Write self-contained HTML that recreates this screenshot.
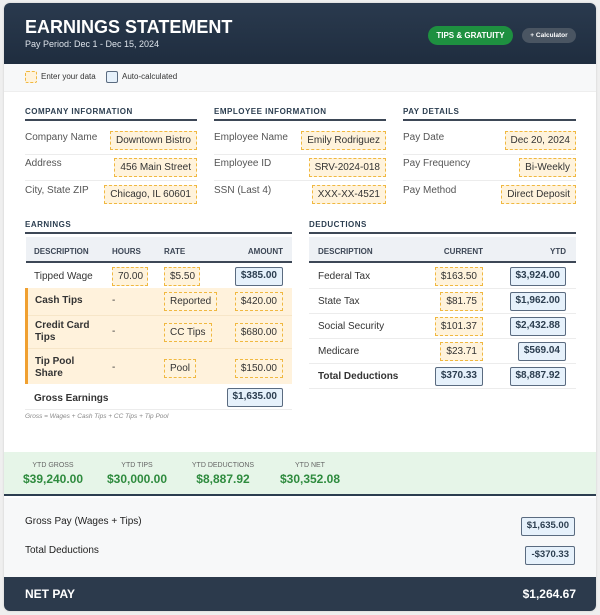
<!DOCTYPE html>
<html><head><meta charset="utf-8"><style>
*{box-sizing:border-box;margin:0;padding:0}
body{width:600px;height:615px;background:#efefef;font-family:"Liberation Sans",Arial,sans-serif;color:#333;position:relative;overflow:hidden}
.card{position:absolute;left:4px;top:3px;width:592px;height:608px;background:#fff;border-radius:6px;overflow:hidden;box-shadow:0 0 2px rgba(0,0,0,.15)}
.a{position:absolute}
.hdr{left:0;top:0;width:592px;height:61px;background:linear-gradient(#2a3a4e,#1f2d3f)}
.in{position:absolute;border:1px dashed #f0b840;background:#fff3dc;height:19px;font-size:10px;line-height:17px;padding:0 5px;color:#333;white-space:nowrap}
.au{position:absolute;border:1px solid #5a6b80;background:#e6f1fb;height:18px;font-size:10px;line-height:16px;padding:0 5px;color:#2c3e50;font-weight:bold;border-radius:2px;white-space:nowrap}
.sh{position:absolute;font-size:8px;font-weight:bold;letter-spacing:.5px;color:#2c3e50;border-bottom:2px solid #3d4756;height:14px}
.lb{position:absolute;font-size:10px;color:#555}
.sep{position:absolute;height:1px;background:#ececec}
.th{position:absolute;font-size:8px;font-weight:bold;color:#3d4756}
.t{position:absolute;font-size:10px;color:#333;line-height:12px}
.b{font-weight:bold}
.yl{position:absolute;font-size:7px;color:#666;text-align:center;width:90px}
.yv{position:absolute;font-size:12px;font-weight:bold;color:#2e8b3e;text-align:center;width:90px}
</style></head><body>
<div class="card">
 <div class="a hdr"></div>
 <div class="a" style="left:21px;top:14px;font-size:18px;font-weight:bold;color:#fff">EARNINGS STATEMENT</div>
 <div class="a" style="left:21px;top:36px;font-size:9px;color:#dde3ea">Pay Period: Dec 1 - Dec 15, 2024</div>
 <div class="a" style="left:424px;top:23px;width:85px;height:19px;background:#1e9040;border-radius:10px;color:#fff;font-size:8px;font-weight:bold;text-align:center;line-height:19px">TIPS &amp; GRATUITY</div>
 <div class="a" style="left:518px;top:25px;width:54px;height:15px;background:#4a5562;border-radius:8px;color:#fff;font-size:6.5px;font-weight:bold;text-align:center;line-height:15px">+ Calculator</div>

 <div class="a" style="left:0;top:61px;width:592px;height:28px;background:#f7f8f9;border-bottom:1px solid #eee"></div>
 <div class="a" style="left:21px;top:68px;width:12px;height:12px;border:1px dashed #f0b840;background:#fff3dc;border-radius:2px"></div>
 <div class="a" style="left:37px;top:69px;font-size:8px;color:#333">Enter your data</div>
 <div class="a" style="left:102px;top:68px;width:12px;height:12px;border:1px solid #5a6b80;background:#e6f1fb;border-radius:2px"></div>
 <div class="a" style="left:118px;top:69px;font-size:8px;color:#333">Auto-calculated</div>

 <div class="sh" style="left:21px;top:104px;width:172px">COMPANY INFORMATION</div>
 <div class="sh" style="left:210px;top:104px;width:172px">EMPLOYEE INFORMATION</div>
 <div class="sh" style="left:399px;top:104px;width:173px">PAY DETAILS</div>

 <div class="lb" style="left:21px;top:129px">Company Name</div><div class="in" style="right:399px;top:128px">Downtown Bistro</div>
 <div class="sep" style="left:21px;top:151px;width:172px"></div>
 <div class="lb" style="left:21px;top:155px">Address</div><div class="in" style="right:399px;top:155px">456 Main Street</div>
 <div class="sep" style="left:21px;top:177px;width:172px"></div>
 <div class="lb" style="left:21px;top:182px">City, State ZIP</div><div class="in" style="right:399px;top:182px">Chicago, IL 60601</div>

 <div class="lb" style="left:210px;top:129px">Employee Name</div><div class="in" style="right:210px;top:128px">Emily Rodriguez</div>
 <div class="sep" style="left:210px;top:151px;width:172px"></div>
 <div class="lb" style="left:210px;top:155px">Employee ID</div><div class="in" style="right:210px;top:155px">SRV-2024-018</div>
 <div class="sep" style="left:210px;top:177px;width:172px"></div>
 <div class="lb" style="left:210px;top:182px">SSN (Last 4)</div><div class="in" style="right:210px;top:182px">XXX-XX-4521</div>

 <div class="lb" style="left:399px;top:129px">Pay Date</div><div class="in" style="right:20px;top:128px">Dec 20, 2024</div>
 <div class="sep" style="left:399px;top:151px;width:173px"></div>
 <div class="lb" style="left:399px;top:155px">Pay Frequency</div><div class="in" style="right:20px;top:155px">Bi-Weekly</div>
 <div class="sep" style="left:399px;top:177px;width:173px"></div>
 <div class="lb" style="left:399px;top:182px">Pay Method</div><div class="in" style="right:20px;top:182px">Direct Deposit</div>

 <div class="sh" style="left:21px;top:217px;width:267px">EARNINGS</div>
 <div class="sh" style="left:305px;top:217px;width:267px">DEDUCTIONS</div>

 <div class="a" style="left:22px;top:234px;width:266px;height:26px;background:#eef1f5;border-bottom:2px solid #3d4756"></div>
 <div class="th" style="left:30px;top:244px">DESCRIPTION</div>
 <div class="th" style="left:108px;top:244px">HOURS</div>
 <div class="th" style="left:160px;top:244px">RATE</div>
 <div class="th" style="right:313px;top:244px">AMOUNT</div>
 <div class="t" style="left:30px;top:268px">Tipped Wage</div>
 <div class="in" style="left:108px;top:264px;width:36px">70.00</div>
 <div class="in" style="left:160px;top:264px;width:36px">$5.50</div>
 <div class="au" style="right:313px;top:264px;height:19px">$385.00</div>
 <div class="a" style="left:21px;top:285px;width:267px;height:96px;background:#fff2dc;border-left:3px solid #f0a030"></div>
 <div class="sep" style="left:24px;top:312px;width:264px;background:#f7e6c8"></div>
 <div class="sep" style="left:24px;top:345px;width:264px;background:#f7e6c8"></div>
 <div class="t b" style="left:31px;top:292px">Cash Tips</div>
 <div class="t" style="left:108px;top:292px">-</div>
 <div class="in" style="left:160px;top:289px">Reported</div>
 <div class="in" style="right:313px;top:289px">$420.00</div>
 <div class="t b" style="left:31px;top:317px">Credit Card<br>Tips</div>
 <div class="t" style="left:108px;top:323px">-</div>
 <div class="in" style="left:160px;top:320px">CC Tips</div>
 <div class="in" style="right:313px;top:320px">$680.00</div>
 <div class="t b" style="left:31px;top:353px">Tip Pool<br>Share</div>
 <div class="t" style="left:108px;top:359px">-</div>
 <div class="in" style="left:160px;top:356px">Pool</div>
 <div class="in" style="right:313px;top:356px">$150.00</div>
 <div class="t b" style="left:30px;top:390px">Gross Earnings</div>
 <div class="au" style="right:313px;top:385px;height:19px">$1,635.00</div>
 <div class="sep" style="left:21px;top:406px;width:267px"></div>
 <div class="a" style="left:21px;top:410px;font-size:6.5px;font-style:italic;color:#888">Gross = Wages + Cash Tips + CC Tips + Tip Pool</div>

 <div class="a" style="left:305px;top:234px;width:267px;height:26px;background:#eef1f5;border-bottom:2px solid #3d4756"></div>
 <div class="th" style="left:314px;top:244px">DESCRIPTION</div>
 <div class="th" style="right:113px;top:244px">CURRENT</div>
 <div class="th" style="right:30px;top:244px">YTD</div>
 <div class="t" style="left:314px;top:268px">Federal Tax</div><div class="in" style="right:113px;top:264px">$163.50</div><div class="au" style="right:30px;top:264px;height:19px">$3,924.00</div>
 <div class="sep" style="left:305px;top:285px;width:267px"></div>
 <div class="t" style="left:314px;top:293px">State Tax</div><div class="in" style="right:113px;top:289px">$81.75</div><div class="au" style="right:30px;top:289px;height:19px">$1,962.00</div>
 <div class="sep" style="left:305px;top:310px;width:267px"></div>
 <div class="t" style="left:314px;top:318px">Social Security</div><div class="in" style="right:113px;top:314px">$101.37</div><div class="au" style="right:30px;top:314px;height:19px">$2,432.88</div>
 <div class="sep" style="left:305px;top:335px;width:267px"></div>
 <div class="t" style="left:314px;top:343px">Medicare</div><div class="in" style="right:113px;top:339px">$23.71</div><div class="au" style="right:30px;top:339px;height:19px">$569.04</div>
 <div class="sep" style="left:305px;top:360px;width:267px"></div>
 <div class="t b" style="left:314px;top:368px">Total Deductions</div><div class="au" style="right:113px;top:364px;height:19px">$370.33</div><div class="au" style="right:30px;top:364px;height:19px">$8,887.92</div>
 <div class="sep" style="left:305px;top:385px;width:267px"></div>

 <div class="a" style="left:0;top:449px;width:592px;height:44px;background:#e6f5e8;border-bottom:2px solid #2c3e50"></div>
 <div class="yl" style="left:4px;top:459px">YTD GROSS</div><div class="yv" style="left:4px;top:469px">$39,240.00</div>
 <div class="yl" style="left:88px;top:459px">YTD TIPS</div><div class="yv" style="left:88px;top:469px">$30,000.00</div>
 <div class="yl" style="left:174px;top:459px">YTD DEDUCTIONS</div><div class="yv" style="left:174px;top:469px">$8,887.92</div>
 <div class="yl" style="left:261px;top:459px">YTD NET</div><div class="yv" style="left:261px;top:469px">$30,352.08</div>

 <div class="a" style="left:0;top:495px;width:592px;height:80px;background:#f7f8f9"></div>
 <div class="a" style="left:21px;top:513px;font-size:10px;color:#222">Gross Pay (Wages + Tips)</div>
 <div class="au" style="right:21px;top:514px;font-size:9.5px;height:19px">$1,635.00</div>
 <div class="a" style="left:21px;top:542px;font-size:10px;color:#222">Total Deductions</div>
 <div class="au" style="right:21px;top:543px;font-size:9.5px;height:19px">-$370.33</div>

 <div class="a" style="left:0;top:574px;width:592px;height:34px;background:#2c3a4c"></div>
 <div class="a" style="left:21px;top:584px;font-size:12px;font-weight:bold;color:#fff">NET PAY</div>
 <div class="a" style="right:20px;top:584px;font-size:12px;font-weight:bold;color:#fff">$1,264.67</div>
</div>
</body></html>
